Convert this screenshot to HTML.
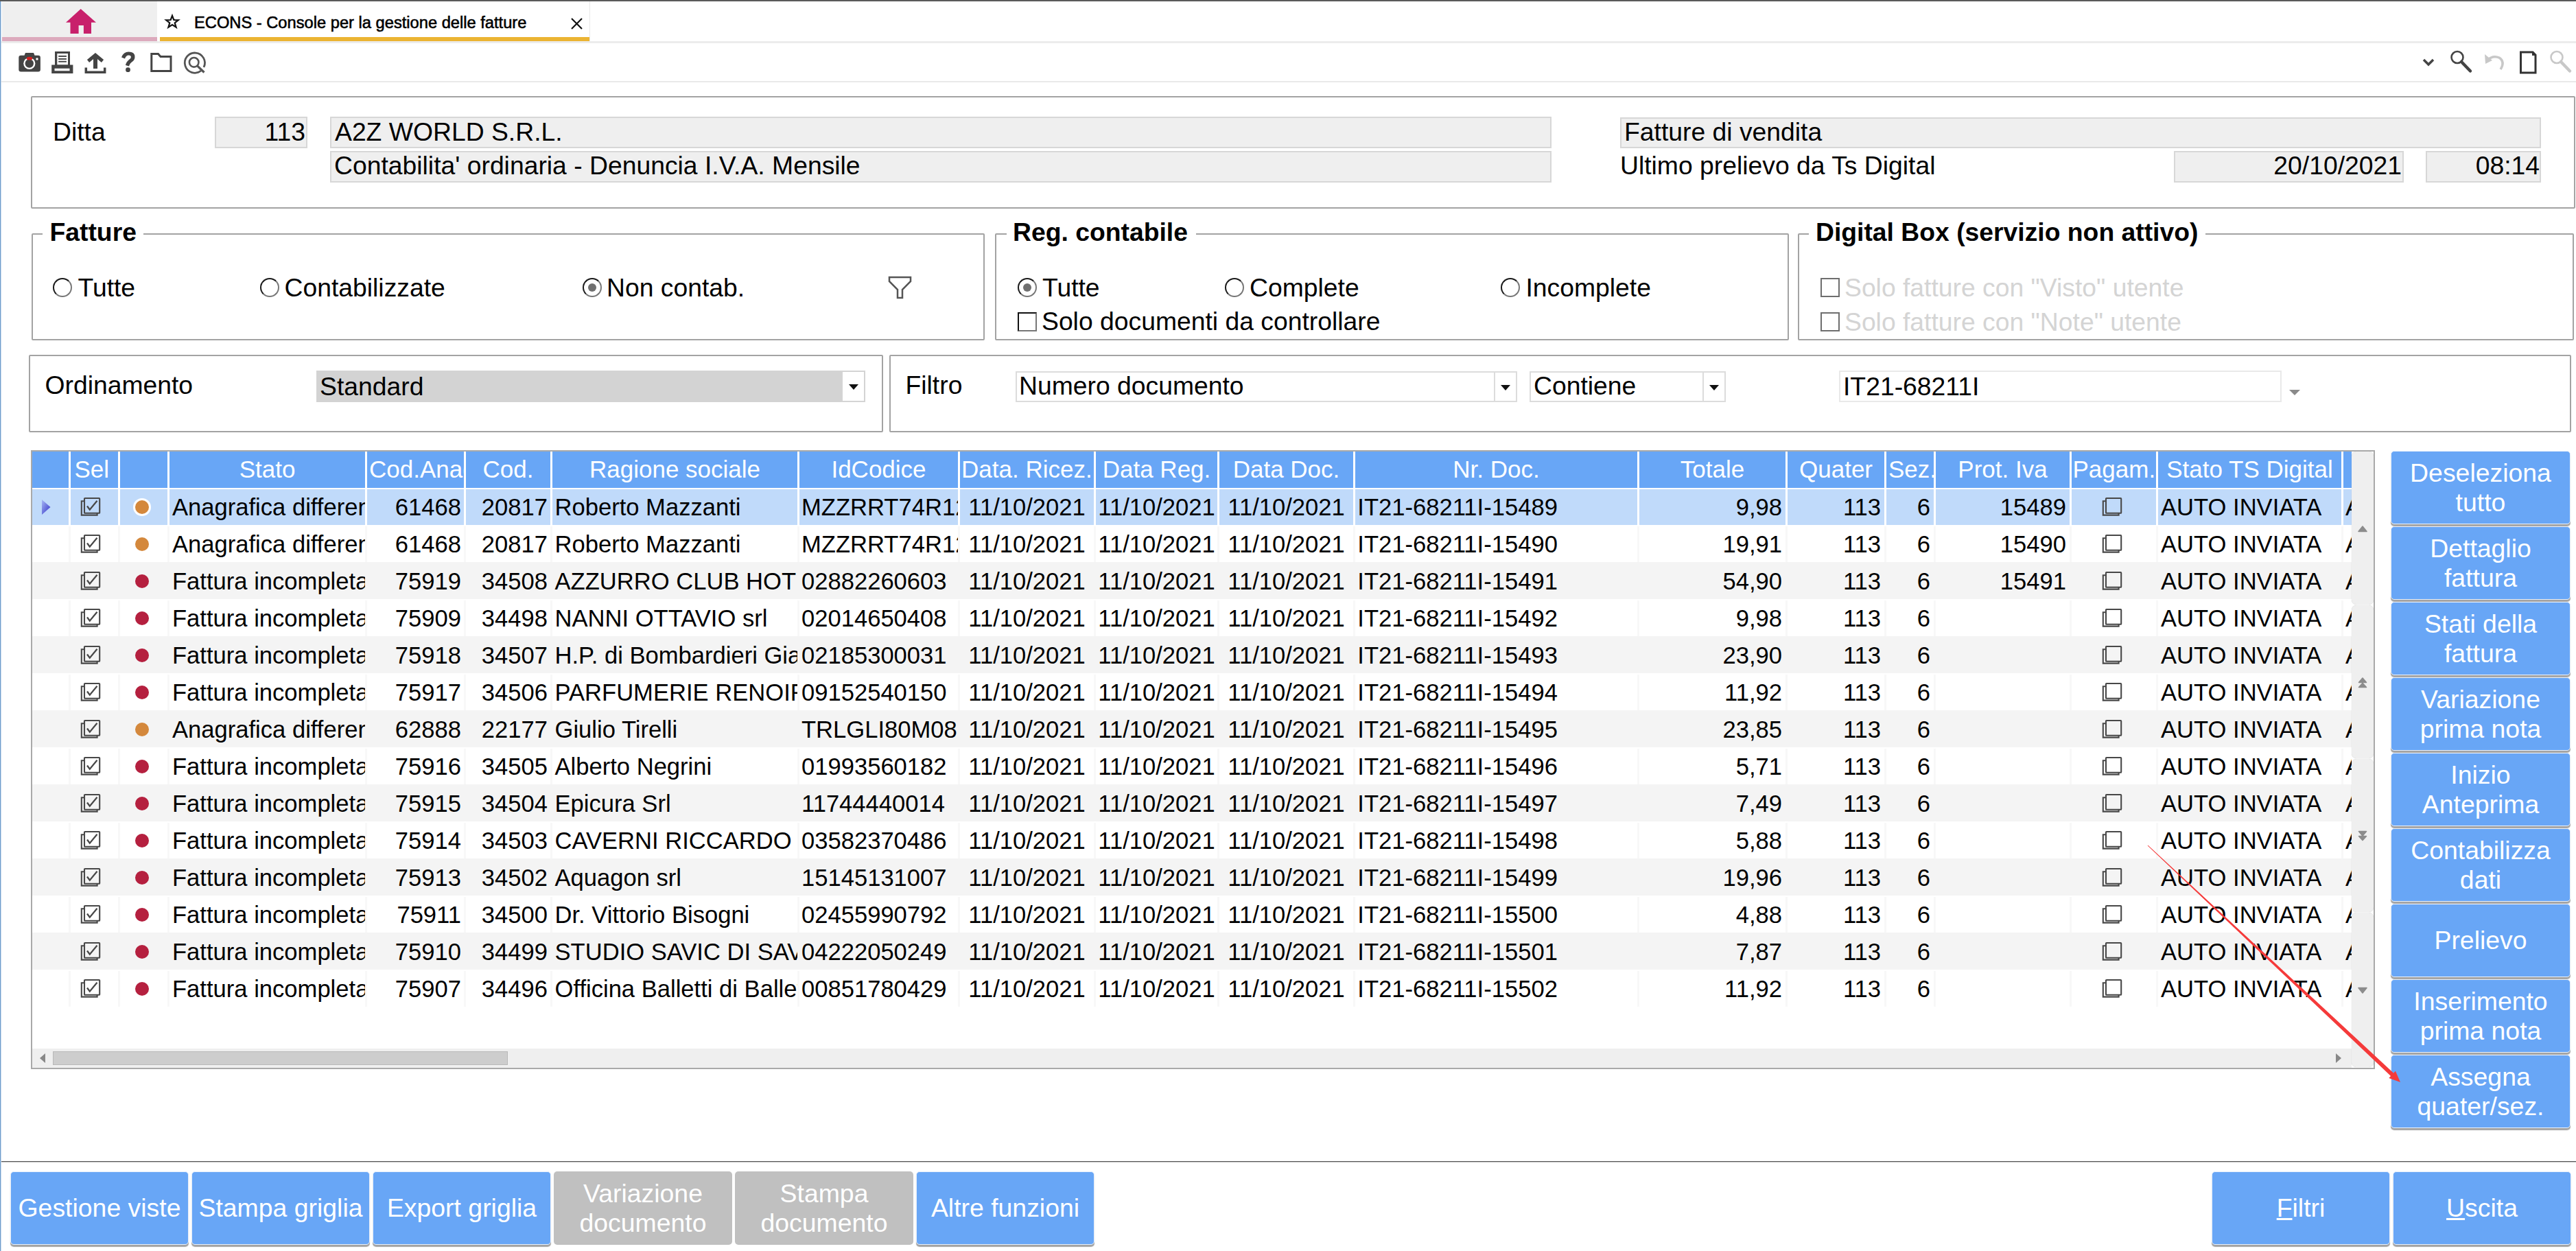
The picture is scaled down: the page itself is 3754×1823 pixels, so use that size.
<!DOCTYPE html><html><head><meta charset="utf-8"><style>
*{box-sizing:border-box;margin:0;padding:0}
html,body{width:3754px;height:1823px;overflow:hidden;background:#fff}
body{position:relative;font-family:"Liberation Sans",sans-serif;color:#000}
.a{position:absolute}
.t{position:absolute;white-space:nowrap;line-height:1}
.lbl{font-size:37px}
.fld{position:absolute;background:#efefef;border:2px solid #d7d7d7}
.box{position:absolute;border:2px solid #a3a3a3;border-radius:2px}
.leg{position:absolute;background:#fff;font-weight:bold;font-size:37.3px;white-space:nowrap;line-height:1}
.radio{position:absolute;width:28px;height:28px;border:2px solid #777;border-top-color:#1a1a1a;border-left-color:#1a1a1a;border-radius:50%;background:#fff;transform:rotate(0deg)}
.radio.on::after{content:"";position:absolute;left:6px;top:6px;width:12px;height:12px;border-radius:50%;background:#707070}
.chk{position:absolute;width:28px;height:28px;border:2px solid #505050;background:#fff}
.btn{position:absolute;background:#68a6f6;color:#fff;border-radius:5px;box-shadow:0 3px 1px rgba(0,0,0,.36);font-size:37.4px;text-align:center;display:flex;align-items:center;justify-content:center;line-height:42.5px;border:1px solid #e8f0fb}
.btn.dis{background:#c0c0c0;box-shadow:none;border:none}
.grid{position:absolute;left:45px;top:656px;width:3416px;height:902px;border:2px solid #a9a9a9;background:#fff;overflow:hidden}
.hd{position:absolute;top:0;height:53px;background:#68a6f6;color:#fff;font-size:35px;overflow:hidden;white-space:nowrap;text-align:center;line-height:1}
.hd span{position:absolute;left:0;right:0;top:15px}
.cell{position:absolute;height:52px;overflow:hidden;white-space:nowrap;font-size:34.6px;line-height:1}
.cell span{position:absolute;top:12px}
.cmb{position:absolute;background:#fff;border:2px solid #dcdcdc}
.dd{position:absolute;top:0;bottom:0;border-left:2px solid #dcdcdc;background:#fff}
.dd::after{content:"";position:absolute;left:50%;top:50%;margin-left:-7px;margin-top:-3px;border-left:7px solid transparent;border-right:7px solid transparent;border-top:8px solid #111}
.seg{position:absolute;left:0;width:32px;background:#efefef;border-radius:7px;box-shadow:0 0 1px rgba(0,0,0,.25)}
</style></head><body><div class="a" style="left:0;top:0;width:3754px;height:2px;background:#5a5a5a"></div>
<div class="a" style="left:0;top:2px;width:1px;height:1821px;background:#6f9cca"></div><div class="a" style="left:1px;top:2px;width:1px;height:1821px;background:#c5d9ee"></div>
<div class="a" style="left:2px;top:60px;width:3752px;height:3px;background:#ececec"></div>
<div class="a" style="left:3px;top:2px;width:226px;height:58px;background:#efefef"></div>
<div class="a" style="left:3px;top:54px;width:226px;height:6px;background:#dcaabd"></div>
<svg class="a" style="left:0;top:0" width="300" height="62"><path d="M117.7 13 L96 32.8 L102.5 32.8 L102.5 49 L114.6 49 L114.6 37 L121.9 37 L121.9 49 L133 49 L133 32.8 L140 32.8 Z" fill="#c8206b"/></svg>
<div class="a" style="left:230px;top:2px;width:630px;height:58px;background:#fff;border-right:1px solid #e8e8e8"></div>
<div class="a" style="left:233px;top:54px;width:626px;height:6px;background:#ebb433"></div>
<svg class="a" style="left:236px;top:16px" width="32" height="32"><path d="M15 6.8 L17.3 13 L23.9 13.3 L18.7 17.4 L20.6 23.7 L15 20 L9.4 23.7 L11.3 17.4 L6.1 13.3 L12.7 13 Z" fill="none" stroke="#111" stroke-width="2.2" stroke-linejoin="miter"/></svg>
<div class="t" style="left:282.5px;top:21px;font-size:24.8px;-webkit-text-stroke:0.6px #000;transform:scaleX(0.955);transform-origin:0 0">ECONS - Console per la gestione delle fatture</div>
<svg class="a" style="left:830px;top:24px" width="22" height="22"><path d="M3 3 L18 18 M18 3 L3 18" stroke="#111" stroke-width="2.2"/></svg>
<div class="a" style="left:2px;top:118px;width:3752px;height:2px;background:#e9e9e9"></div>
<svg class="a" style="left:0;top:60px" width="320" height="60">
<g fill="#444">
 <path d="M27.3 24 Q27.3 20.8 30.5 20.8 L35.5 20.8 L37 17 L49 17 L50.5 20.8 L55.7 20.8 Q58.9 20.8 58.9 24 L58.9 41.2 Q58.9 44.4 55.7 44.4 L30.5 44.4 Q27.3 44.4 27.3 41.2 Z"/>
 <circle cx="42.8" cy="32.5" r="8.6" fill="#fff"/><circle cx="42.8" cy="32.5" r="6.2" fill="#444"/>
 <ellipse cx="43" cy="25.2" rx="4.2" ry="2.4" fill="#d42020"/><circle cx="54" cy="26" r="1.7" fill="#fff"/>
</g>
<g fill="#444">
 <path d="M80 15 L102 15 L102 35 L80 35 Z M83.3 18 L83.3 34.6 L99 34.6 L99 18 Z" fill-rule="evenodd"/>
 <rect x="85.2" y="21" width="11.7" height="1.9"/><rect x="85.2" y="25" width="11.7" height="1.9"/><rect x="85.2" y="28.8" width="11.7" height="1.9"/>
 <path d="M75.2 34.6 L106.4 34.6 L106.4 46.9 L75.2 46.9 Z M79.5 39.8 L79.5 43.3 L101.5 43.3 L101.5 39.8 Z" fill-rule="evenodd"/>
</g>
<g fill="none" stroke="#444">
 <path d="M128.5 29 L139 20.3 L149.5 29" stroke-width="5" stroke-linejoin="miter"/>
 <path d="M139 22 L139 40" stroke-width="6"/>
 <path d="M125.3 38.4 L125.3 45.2 L152.7 45.2 L152.7 38.4" stroke-width="3.5"/>
</g>
<path d="M177 23.5 Q180 15.6 187.5 15.6 Q196.5 15.6 196.5 23 Q196.5 27.5 192 30.5 Q189.5 32.2 188.5 35 L188 36.5 L183 35 Q184 30 188 27 Q191.2 24.8 191 22.7 Q190.5 20.5 187.5 20.5 Q183.8 20.5 182 25.5 Z" fill="#444"/>
<circle cx="186.5" cy="41.7" r="3.4" fill="#444"/>
<path d="M220.8 43.5 L220.8 18.5 L230.5 18.5 L234 22.5 L249 22.5 L249 43.5 Z" fill="none" stroke="#444" stroke-width="3"/>
<path d="M293 43 A14.6 14.6 0 1 1 297 38" fill="none" stroke="#555" stroke-width="2.8"/>
<circle cx="282.7" cy="30.8" r="6.8" fill="none" stroke="#555" stroke-width="2.6"/>
<path d="M287.5 35.8 L297.5 45.5" stroke="#555" stroke-width="3.2"/>
</svg>
<svg class="a" style="left:3500px;top:60px" width="254" height="60">
<path d="M32 27 L39 34 L46 27" fill="none" stroke="#444" stroke-width="3.5"/>
<circle cx="81" cy="23.5" r="8.5" fill="none" stroke="#444" stroke-width="2.6"/>
<path d="M87 30 L100 43.5" stroke="#444" stroke-width="4.5" stroke-linecap="round"/>
<path d="M121 19 L122 33 L132 28" fill="#c8c8c8"/>
<path d="M124 28 Q133 20 142 24 Q151 30 144 41" fill="none" stroke="#c8c8c8" stroke-width="3.5"/>
<path d="M173.5 16 L191 16 L195 20 L195 46 L173.5 46 Z" fill="none" stroke="#333" stroke-width="3"/>
<path d="M190 16 L195 21 L190 21Z" fill="#333"/>
<circle cx="226" cy="23.5" r="8.5" fill="none" stroke="#c8c8c8" stroke-width="2.6"/>
<path d="M232 30 L245 43.5" stroke="#c8c8c8" stroke-width="4.5" stroke-linecap="round"/>
</svg>
<div class="box" style="left:45px;top:140px;width:3708px;height:164px;"></div>
<div class="t" style="left:77px;top:174.4px;font-size:37.3px;">Ditta</div>
<div class="fld" style="left:313px;top:170px;width:135px;height:46px;"></div>
<div class="t" style="right:3309px;top:174.4px;font-size:37.3px;">113</div>
<div class="fld" style="left:481px;top:170px;width:1780px;height:46px;"></div>
<div class="t" style="left:488px;top:174.4px;font-size:37.3px;">A2Z WORLD S.R.L.</div>
<div class="fld" style="left:481px;top:220px;width:1780px;height:46px;"></div>
<div class="t" style="left:487px;top:223.4px;font-size:37.3px;">Contabilita' ordinaria - Denuncia I.V.A. Mensile</div>
<div class="fld" style="left:2361px;top:171px;width:1342px;height:45px;"></div>
<div class="t" style="left:2367px;top:174.4px;font-size:37.3px;">Fatture di vendita</div>
<div class="t" style="left:2361px;top:223.4px;font-size:37.3px;">Ultimo prelievo da Ts Digital</div>
<div class="fld" style="left:3168px;top:220px;width:335px;height:46px;"></div>
<div class="t" style="right:254px;top:223.4px;font-size:37.3px;">20/10/2021</div>
<div class="fld" style="left:3535px;top:220px;width:168px;height:46px;"></div>
<div class="t" style="right:53px;top:223.4px;font-size:37.3px;">08:14</div>
<div class="box" style="left:46px;top:340px;width:1389px;height:156px;"></div>
<div class="a" style="left:62px;top:338px;width:147px;height:6px;background:#fff"></div>
<div class="leg" style="left:72.5px;top:320.4px;background:transparent">Fatture</div>
<div class="box" style="left:1450px;top:340px;width:1157px;height:156px;"></div>
<div class="a" style="left:1467px;top:338px;width:276px;height:6px;background:#fff"></div>
<div class="leg" style="left:1476px;top:320.4px;background:transparent">Reg. contabile</div>
<div class="box" style="left:2620px;top:340px;width:1131px;height:156px;"></div>
<div class="a" style="left:2636px;top:338px;width:578px;height:6px;background:#fff"></div>
<div class="leg" style="left:2646px;top:320.4px;background:transparent">Digital Box (servizio non attivo)</div>
<div class="radio" style="left:77px;top:405px"></div>
<div class="t" style="left:113.5px;top:401.4px;font-size:37.3px;">Tutte</div>
<div class="radio" style="left:379px;top:405px"></div>
<div class="t" style="left:414.5px;top:401.4px;font-size:37.3px;">Contabilizzate</div>
<div class="radio on" style="left:849px;top:405px"></div>
<div class="t" style="left:884px;top:401.4px;font-size:37.3px;">Non contab.</div>
<svg class="a" style="left:1290px;top:398px" width="44" height="44"><path d="M6 6 L37 6 L37 12 L25 24 L25 36 L18 36 L18 24 L6 12 Z" fill="none" stroke="#555" stroke-width="2.5" stroke-linejoin="miter"/></svg>
<div class="radio on" style="left:1483px;top:405px"></div>
<div class="t" style="left:1519px;top:401.4px;font-size:37.3px;">Tutte</div>
<div class="radio" style="left:1785px;top:405px"></div>
<div class="t" style="left:1821px;top:401.4px;font-size:37.3px;">Complete</div>
<div class="radio" style="left:2187px;top:405px"></div>
<div class="t" style="left:2223.5px;top:401.4px;font-size:37.3px;">Incomplete</div>
<div class="chk" style="left:1483px;top:455px;border-color:#777;border-top-color:#111;border-left-color:#111"></div>
<div class="t" style="left:1518px;top:450.4px;font-size:37.3px;">Solo documenti da controllare</div>
<div class="chk" style="left:2653px;top:405px;border-color:#6e6e6e"></div>
<div class="t" style="left:2688px;top:401.4px;font-size:37.3px;color:#d4d4d4">Solo fatture con "Visto" utente</div>
<div class="chk" style="left:2653px;top:455px;border-color:#6e6e6e"></div>
<div class="t" style="left:2688px;top:451.4px;font-size:37.3px;color:#d4d4d4">Solo fatture con "Note" utente</div>
<div class="box" style="left:42px;top:517px;width:1245px;height:113px;"></div>
<div class="t" style="left:65.5px;top:543.4px;font-size:37.3px;">Ordinamento</div>
<div class="a" style="left:461px;top:540px;width:766px;height:46px;background:#d3d3d3"></div>
<div class="cmb" style="left:1226px;top:540px;width:35px;height:46px;border-color:#d4d4d4"><div class="dd" style="left:0;right:0;border-left:none"></div></div>
<div class="t" style="left:466px;top:544.9px;font-size:37.3px;">Standard</div>
<div class="box" style="left:1296px;top:517px;width:2451px;height:113px;"></div>
<div class="t" style="left:1319.5px;top:543.4px;font-size:37.3px;">Filtro</div>
<div class="cmb" style="left:1480px;top:541px;width:731px;height:45px"><div class="dd" style="left:695px;right:0"></div></div>
<div class="t" style="left:1485px;top:544.4px;font-size:37.3px;">Numero documento</div>
<div class="cmb" style="left:2229px;top:541px;width:286px;height:45px"><div class="dd" style="left:250px;right:0"></div></div>
<div class="t" style="left:2235px;top:544.4px;font-size:37.3px;">Contiene</div>
<div class="cmb" style="left:2680px;top:540px;width:645px;height:46px;border-color:#e9e9e9"></div>
<div class="t" style="left:2686px;top:544.9px;font-size:37.3px;">IT21-68211I</div>
<div class="a" style="left:3336px;top:568px;width:0;height:0;border-left:8px solid transparent;border-right:8px solid transparent;border-top:8px solid #8a8a8a"></div>
<div class="grid">
<div class="a" style="left:0;top:0;width:3380px;height:53px;background:#68a6f6"></div>
<div class="a" style="left:0;top:53px;width:3380px;height:2px;background:#fff"></div>
<div class="hd" style="left:0px;width:53px"><span style="position:absolute;left:-50px;right:-50px;top:8.2px;text-align:center"></span></div>
<div class="hd" style="left:56px;width:69px"><span style="position:absolute;left:5.5px;right:auto;top:8.2px">Sel</span></div>
<div class="hd" style="left:128px;width:69px"><span style="position:absolute;left:-50px;right:-50px;top:8.2px;text-align:center"></span></div>
<div class="hd" style="left:200px;width:285px"><span style="position:absolute;left:-50px;right:-50px;top:8.2px;text-align:center">Stato</span></div>
<div class="hd" style="left:488px;width:141px"><span style="position:absolute;left:3px;right:auto;top:8.2px">Cod.Anag.</span></div>
<div class="hd" style="left:632px;width:123px"><span style="position:absolute;left:-50px;right:-50px;top:8.2px;text-align:center">Cod.</span></div>
<div class="hd" style="left:758px;width:357px"><span style="position:absolute;left:-50px;right:-50px;top:8.2px;text-align:center">Ragione sociale</span></div>
<div class="hd" style="left:1118px;width:231px"><span style="position:absolute;left:-50px;right:-50px;top:8.2px;text-align:center">IdCodice</span></div>
<div class="hd" style="left:1352px;width:195px"><span style="position:absolute;left:2px;right:auto;top:8.2px">Data. Ricez.</span></div>
<div class="hd" style="left:1550px;width:177px"><span style="position:absolute;left:-50px;right:-50px;top:8.2px;text-align:center">Data Reg.</span></div>
<div class="hd" style="left:1730px;width:195px"><span style="position:absolute;left:-50px;right:-50px;top:8.2px;text-align:center">Data Doc.</span></div>
<div class="hd" style="left:1928px;width:411px"><span style="position:absolute;left:-50px;right:-50px;top:8.2px;text-align:center">Nr. Doc.</span></div>
<div class="hd" style="left:2342px;width:213px"><span style="position:absolute;left:-50px;right:-50px;top:8.2px;text-align:center">Totale</span></div>
<div class="hd" style="left:2558px;width:141px"><span style="position:absolute;left:-50px;right:-50px;top:8.2px;text-align:center">Quater</span></div>
<div class="hd" style="left:2702px;width:69px"><span style="position:absolute;left:3px;right:auto;top:8.2px">Sez.</span></div>
<div class="hd" style="left:2774px;width:195px"><span style="position:absolute;left:-50px;right:-50px;top:8.2px;text-align:center">Prot. Iva</span></div>
<div class="hd" style="left:2972px;width:123px"><span style="position:absolute;left:1.5px;right:auto;top:8.2px">Pagam.</span></div>
<div class="hd" style="left:3098px;width:267px"><span style="position:absolute;left:-50px;right:-50px;top:8.2px;text-align:center">Stato TS Digital</span></div>
<div class="hd" style="left:3368px;width:85px"><span style="position:absolute;left:-50px;right:-50px;top:8.2px;text-align:center">Al</span></div>
<div class="a" style="left:53px;top:0;width:3px;height:53px;background:#fff"></div>
<div class="a" style="left:125px;top:0;width:3px;height:53px;background:#fff"></div>
<div class="a" style="left:197px;top:0;width:3px;height:53px;background:#fff"></div>
<div class="a" style="left:485px;top:0;width:3px;height:53px;background:#fff"></div>
<div class="a" style="left:629px;top:0;width:3px;height:53px;background:#fff"></div>
<div class="a" style="left:755px;top:0;width:3px;height:53px;background:#fff"></div>
<div class="a" style="left:1115px;top:0;width:3px;height:53px;background:#fff"></div>
<div class="a" style="left:1349px;top:0;width:3px;height:53px;background:#fff"></div>
<div class="a" style="left:1547px;top:0;width:3px;height:53px;background:#fff"></div>
<div class="a" style="left:1727px;top:0;width:3px;height:53px;background:#fff"></div>
<div class="a" style="left:1925px;top:0;width:3px;height:53px;background:#fff"></div>
<div class="a" style="left:2339px;top:0;width:3px;height:53px;background:#fff"></div>
<div class="a" style="left:2555px;top:0;width:3px;height:53px;background:#fff"></div>
<div class="a" style="left:2699px;top:0;width:3px;height:53px;background:#fff"></div>
<div class="a" style="left:2771px;top:0;width:3px;height:53px;background:#fff"></div>
<div class="a" style="left:2969px;top:0;width:3px;height:53px;background:#fff"></div>
<div class="a" style="left:3095px;top:0;width:3px;height:53px;background:#fff"></div>
<div class="a" style="left:3365px;top:0;width:3px;height:53px;background:#fff"></div>
<div class="a" style="left:0;top:55px;width:3380px;height:52px;background:#c0dafa"></div>
<div class="a" style="left:53px;top:55px;width:3px;height:52px;background:#fff"></div>
<div class="a" style="left:125px;top:55px;width:3px;height:52px;background:#fff"></div>
<div class="a" style="left:197px;top:55px;width:3px;height:52px;background:#fff"></div>
<div class="a" style="left:485px;top:55px;width:3px;height:52px;background:#fff"></div>
<div class="a" style="left:629px;top:55px;width:3px;height:52px;background:#fff"></div>
<div class="a" style="left:755px;top:55px;width:3px;height:52px;background:#fff"></div>
<div class="a" style="left:1115px;top:55px;width:3px;height:52px;background:#fff"></div>
<div class="a" style="left:1349px;top:55px;width:3px;height:52px;background:#fff"></div>
<div class="a" style="left:1547px;top:55px;width:3px;height:52px;background:#fff"></div>
<div class="a" style="left:1727px;top:55px;width:3px;height:52px;background:#fff"></div>
<div class="a" style="left:1925px;top:55px;width:3px;height:52px;background:#fff"></div>
<div class="a" style="left:2339px;top:55px;width:3px;height:52px;background:#fff"></div>
<div class="a" style="left:2555px;top:55px;width:3px;height:52px;background:#fff"></div>
<div class="a" style="left:2699px;top:55px;width:3px;height:52px;background:#fff"></div>
<div class="a" style="left:2771px;top:55px;width:3px;height:52px;background:#fff"></div>
<div class="a" style="left:2969px;top:55px;width:3px;height:52px;background:#fff"></div>
<div class="a" style="left:3095px;top:55px;width:3px;height:52px;background:#fff"></div>
<div class="a" style="left:3365px;top:55px;width:3px;height:52px;background:#fff"></div>
<svg class="a" style="left:14px;top:70px" width="14" height="23"><defs><linearGradient id="ag" x1="0" y1="0" x2="1" y2="1"><stop offset="0" stop-color="#a8b8f4"/><stop offset="1" stop-color="#3030c8"/></linearGradient></defs><path d="M0 0 L12.5 11 L0 22 Z" fill="url(#ag)"/></svg>
<svg class="a" style="left:70px;top:66px" width="30" height="30"><path d="M6 6.3 L1.8 6.3 L1.8 26.6 L24.6 26.6 L24.6 24" fill="none" stroke="#484848" stroke-width="2.1"/><rect x="6" y="2" width="22.2" height="21.8" rx="0.8" fill="none" stroke="#484848" stroke-width="2.1"/><path d="M10 13.5 L13.8 18.7 L24.5 5.8" fill="none" stroke="#484848" stroke-width="2.3"/></svg>
<svg class="a" style="left:144px;top:65px" width="32" height="32"><circle cx="16" cy="16" r="13" fill="#fff"/><circle cx="16" cy="16" r="10" fill="#d4883c"/></svg>
<div class="cell" style="left:200px;top:55px;width:285px"><span style="left:4px;top:8.7px">Anagrafica differenza</span></div>
<div class="cell" style="left:488px;top:55px;width:141px"><span style="right:4px;top:8.7px">61468</span></div>
<div class="cell" style="left:632px;top:55px;width:123px"><span style="right:4px;top:8.7px">20817</span></div>
<div class="cell" style="left:758px;top:55px;width:357px"><span style="left:3.5px;top:8.7px">Roberto Mazzanti</span></div>
<div class="cell" style="left:1118px;top:55px;width:231px"><span style="left:3px;top:8.7px">MZZRRT74R12</span></div>
<div class="cell" style="left:1352px;top:55px;width:195px"><span style="left:0;right:0;text-align:center;top:8.7px">11/10/2021</span></div>
<div class="cell" style="left:1550px;top:55px;width:177px"><span style="left:0;right:0;text-align:center;top:8.7px">11/10/2021</span></div>
<div class="cell" style="left:1730px;top:55px;width:195px"><span style="left:0;right:0;text-align:center;top:8.7px">11/10/2021</span></div>
<div class="cell" style="left:1928px;top:55px;width:411px"><span style="left:3.3px;top:8.7px">IT21-68211I-15489</span></div>
<div class="cell" style="left:2342px;top:55px;width:213px"><span style="right:5px;top:8.7px">9,98</span></div>
<div class="cell" style="left:2558px;top:55px;width:141px"><span style="right:5px;top:8.7px">113</span></div>
<div class="cell" style="left:2702px;top:55px;width:69px"><span style="right:5px;top:8.7px">6</span></div>
<div class="cell" style="left:2774px;top:55px;width:195px"><span style="right:5px;top:8.7px">15489</span></div>
<svg class="a" style="left:3016px;top:66px" width="30" height="30"><path d="M6 6.3 L1.8 6.3 L1.8 26.6 L24.6 26.6 L24.6 24" fill="none" stroke="#484848" stroke-width="2.1"/><rect x="6" y="2" width="22.2" height="21.8" rx="0.8" fill="none" stroke="#484848" stroke-width="2.1"/></svg>
<div class="cell" style="left:3098px;top:55px;width:267px"><span style="left:4px;top:8.7px">AUTO INVIATA</span></div>
<div class="cell" style="left:3368px;top:55px;width:85px"><span style="left:3px;top:8.7px">AUTO INVIATA</span></div>
<div class="a" style="left:0;top:107px;width:3380px;height:54px;background:#fff"></div>
<div class="a" style="left:53px;top:109px;width:3px;height:52px;background:#f8f8f8"></div>
<div class="a" style="left:125px;top:109px;width:3px;height:52px;background:#f8f8f8"></div>
<div class="a" style="left:197px;top:109px;width:3px;height:52px;background:#f8f8f8"></div>
<div class="a" style="left:485px;top:109px;width:3px;height:52px;background:#f8f8f8"></div>
<div class="a" style="left:629px;top:109px;width:3px;height:52px;background:#f8f8f8"></div>
<div class="a" style="left:755px;top:109px;width:3px;height:52px;background:#f8f8f8"></div>
<div class="a" style="left:1115px;top:109px;width:3px;height:52px;background:#f8f8f8"></div>
<div class="a" style="left:1349px;top:109px;width:3px;height:52px;background:#f8f8f8"></div>
<div class="a" style="left:1547px;top:109px;width:3px;height:52px;background:#f8f8f8"></div>
<div class="a" style="left:1727px;top:109px;width:3px;height:52px;background:#f8f8f8"></div>
<div class="a" style="left:1925px;top:109px;width:3px;height:52px;background:#f8f8f8"></div>
<div class="a" style="left:2339px;top:109px;width:3px;height:52px;background:#f8f8f8"></div>
<div class="a" style="left:2555px;top:109px;width:3px;height:52px;background:#f8f8f8"></div>
<div class="a" style="left:2699px;top:109px;width:3px;height:52px;background:#f8f8f8"></div>
<div class="a" style="left:2771px;top:109px;width:3px;height:52px;background:#f8f8f8"></div>
<div class="a" style="left:2969px;top:109px;width:3px;height:52px;background:#f8f8f8"></div>
<div class="a" style="left:3095px;top:109px;width:3px;height:52px;background:#f8f8f8"></div>
<div class="a" style="left:3365px;top:109px;width:3px;height:52px;background:#f8f8f8"></div>
<svg class="a" style="left:70px;top:120px" width="30" height="30"><path d="M6 6.3 L1.8 6.3 L1.8 26.6 L24.6 26.6 L24.6 24" fill="none" stroke="#484848" stroke-width="2.1"/><rect x="6" y="2" width="22.2" height="21.8" rx="0.8" fill="none" stroke="#484848" stroke-width="2.1"/><path d="M10 13.5 L13.8 18.7 L24.5 5.8" fill="none" stroke="#484848" stroke-width="2.3"/></svg>
<svg class="a" style="left:144px;top:119px" width="32" height="32"><circle cx="16" cy="16" r="10" fill="#d4883c"/></svg>
<div class="cell" style="left:200px;top:109px;width:285px"><span style="left:4px;top:8.7px">Anagrafica differenza</span></div>
<div class="cell" style="left:488px;top:109px;width:141px"><span style="right:4px;top:8.7px">61468</span></div>
<div class="cell" style="left:632px;top:109px;width:123px"><span style="right:4px;top:8.7px">20817</span></div>
<div class="cell" style="left:758px;top:109px;width:357px"><span style="left:3.5px;top:8.7px">Roberto Mazzanti</span></div>
<div class="cell" style="left:1118px;top:109px;width:231px"><span style="left:3px;top:8.7px">MZZRRT74R12</span></div>
<div class="cell" style="left:1352px;top:109px;width:195px"><span style="left:0;right:0;text-align:center;top:8.7px">11/10/2021</span></div>
<div class="cell" style="left:1550px;top:109px;width:177px"><span style="left:0;right:0;text-align:center;top:8.7px">11/10/2021</span></div>
<div class="cell" style="left:1730px;top:109px;width:195px"><span style="left:0;right:0;text-align:center;top:8.7px">11/10/2021</span></div>
<div class="cell" style="left:1928px;top:109px;width:411px"><span style="left:3.3px;top:8.7px">IT21-68211I-15490</span></div>
<div class="cell" style="left:2342px;top:109px;width:213px"><span style="right:5px;top:8.7px">19,91</span></div>
<div class="cell" style="left:2558px;top:109px;width:141px"><span style="right:5px;top:8.7px">113</span></div>
<div class="cell" style="left:2702px;top:109px;width:69px"><span style="right:5px;top:8.7px">6</span></div>
<div class="cell" style="left:2774px;top:109px;width:195px"><span style="right:5px;top:8.7px">15490</span></div>
<svg class="a" style="left:3016px;top:120px" width="30" height="30"><path d="M6 6.3 L1.8 6.3 L1.8 26.6 L24.6 26.6 L24.6 24" fill="none" stroke="#484848" stroke-width="2.1"/><rect x="6" y="2" width="22.2" height="21.8" rx="0.8" fill="none" stroke="#484848" stroke-width="2.1"/></svg>
<div class="cell" style="left:3098px;top:109px;width:267px"><span style="left:4px;top:8.7px">AUTO INVIATA</span></div>
<div class="cell" style="left:3368px;top:109px;width:85px"><span style="left:3px;top:8.7px">AUTO INVIATA</span></div>
<div class="a" style="left:0;top:161px;width:3380px;height:54px;background:#f4f4f4"></div>
<svg class="a" style="left:70px;top:174px" width="30" height="30"><path d="M6 6.3 L1.8 6.3 L1.8 26.6 L24.6 26.6 L24.6 24" fill="none" stroke="#484848" stroke-width="2.1"/><rect x="6" y="2" width="22.2" height="21.8" rx="0.8" fill="none" stroke="#484848" stroke-width="2.1"/><path d="M10 13.5 L13.8 18.7 L24.5 5.8" fill="none" stroke="#484848" stroke-width="2.3"/></svg>
<svg class="a" style="left:144px;top:173px" width="32" height="32"><circle cx="16" cy="16" r="10" fill="#b5203f"/></svg>
<div class="cell" style="left:200px;top:163px;width:285px"><span style="left:4px;top:8.7px">Fattura incompleta</span></div>
<div class="cell" style="left:488px;top:163px;width:141px"><span style="right:4px;top:8.7px">75919</span></div>
<div class="cell" style="left:632px;top:163px;width:123px"><span style="right:4px;top:8.7px">34508</span></div>
<div class="cell" style="left:758px;top:163px;width:357px"><span style="left:3.5px;top:8.7px">AZZURRO CLUB HOTEL</span></div>
<div class="cell" style="left:1118px;top:163px;width:231px"><span style="left:3px;top:8.7px">02882260603</span></div>
<div class="cell" style="left:1352px;top:163px;width:195px"><span style="left:0;right:0;text-align:center;top:8.7px">11/10/2021</span></div>
<div class="cell" style="left:1550px;top:163px;width:177px"><span style="left:0;right:0;text-align:center;top:8.7px">11/10/2021</span></div>
<div class="cell" style="left:1730px;top:163px;width:195px"><span style="left:0;right:0;text-align:center;top:8.7px">11/10/2021</span></div>
<div class="cell" style="left:1928px;top:163px;width:411px"><span style="left:3.3px;top:8.7px">IT21-68211I-15491</span></div>
<div class="cell" style="left:2342px;top:163px;width:213px"><span style="right:5px;top:8.7px">54,90</span></div>
<div class="cell" style="left:2558px;top:163px;width:141px"><span style="right:5px;top:8.7px">113</span></div>
<div class="cell" style="left:2702px;top:163px;width:69px"><span style="right:5px;top:8.7px">6</span></div>
<div class="cell" style="left:2774px;top:163px;width:195px"><span style="right:5px;top:8.7px">15491</span></div>
<svg class="a" style="left:3016px;top:174px" width="30" height="30"><path d="M6 6.3 L1.8 6.3 L1.8 26.6 L24.6 26.6 L24.6 24" fill="none" stroke="#484848" stroke-width="2.1"/><rect x="6" y="2" width="22.2" height="21.8" rx="0.8" fill="none" stroke="#484848" stroke-width="2.1"/></svg>
<div class="cell" style="left:3098px;top:163px;width:267px"><span style="left:4px;top:8.7px">AUTO INVIATA</span></div>
<div class="cell" style="left:3368px;top:163px;width:85px"><span style="left:3px;top:8.7px">AUTO INVIATA</span></div>
<div class="a" style="left:0;top:215px;width:3380px;height:54px;background:#fff"></div>
<div class="a" style="left:53px;top:217px;width:3px;height:52px;background:#f8f8f8"></div>
<div class="a" style="left:125px;top:217px;width:3px;height:52px;background:#f8f8f8"></div>
<div class="a" style="left:197px;top:217px;width:3px;height:52px;background:#f8f8f8"></div>
<div class="a" style="left:485px;top:217px;width:3px;height:52px;background:#f8f8f8"></div>
<div class="a" style="left:629px;top:217px;width:3px;height:52px;background:#f8f8f8"></div>
<div class="a" style="left:755px;top:217px;width:3px;height:52px;background:#f8f8f8"></div>
<div class="a" style="left:1115px;top:217px;width:3px;height:52px;background:#f8f8f8"></div>
<div class="a" style="left:1349px;top:217px;width:3px;height:52px;background:#f8f8f8"></div>
<div class="a" style="left:1547px;top:217px;width:3px;height:52px;background:#f8f8f8"></div>
<div class="a" style="left:1727px;top:217px;width:3px;height:52px;background:#f8f8f8"></div>
<div class="a" style="left:1925px;top:217px;width:3px;height:52px;background:#f8f8f8"></div>
<div class="a" style="left:2339px;top:217px;width:3px;height:52px;background:#f8f8f8"></div>
<div class="a" style="left:2555px;top:217px;width:3px;height:52px;background:#f8f8f8"></div>
<div class="a" style="left:2699px;top:217px;width:3px;height:52px;background:#f8f8f8"></div>
<div class="a" style="left:2771px;top:217px;width:3px;height:52px;background:#f8f8f8"></div>
<div class="a" style="left:2969px;top:217px;width:3px;height:52px;background:#f8f8f8"></div>
<div class="a" style="left:3095px;top:217px;width:3px;height:52px;background:#f8f8f8"></div>
<div class="a" style="left:3365px;top:217px;width:3px;height:52px;background:#f8f8f8"></div>
<svg class="a" style="left:70px;top:228px" width="30" height="30"><path d="M6 6.3 L1.8 6.3 L1.8 26.6 L24.6 26.6 L24.6 24" fill="none" stroke="#484848" stroke-width="2.1"/><rect x="6" y="2" width="22.2" height="21.8" rx="0.8" fill="none" stroke="#484848" stroke-width="2.1"/><path d="M10 13.5 L13.8 18.7 L24.5 5.8" fill="none" stroke="#484848" stroke-width="2.3"/></svg>
<svg class="a" style="left:144px;top:227px" width="32" height="32"><circle cx="16" cy="16" r="10" fill="#b5203f"/></svg>
<div class="cell" style="left:200px;top:217px;width:285px"><span style="left:4px;top:8.7px">Fattura incompleta</span></div>
<div class="cell" style="left:488px;top:217px;width:141px"><span style="right:4px;top:8.7px">75909</span></div>
<div class="cell" style="left:632px;top:217px;width:123px"><span style="right:4px;top:8.7px">34498</span></div>
<div class="cell" style="left:758px;top:217px;width:357px"><span style="left:3.5px;top:8.7px">NANNI OTTAVIO srl</span></div>
<div class="cell" style="left:1118px;top:217px;width:231px"><span style="left:3px;top:8.7px">02014650408</span></div>
<div class="cell" style="left:1352px;top:217px;width:195px"><span style="left:0;right:0;text-align:center;top:8.7px">11/10/2021</span></div>
<div class="cell" style="left:1550px;top:217px;width:177px"><span style="left:0;right:0;text-align:center;top:8.7px">11/10/2021</span></div>
<div class="cell" style="left:1730px;top:217px;width:195px"><span style="left:0;right:0;text-align:center;top:8.7px">11/10/2021</span></div>
<div class="cell" style="left:1928px;top:217px;width:411px"><span style="left:3.3px;top:8.7px">IT21-68211I-15492</span></div>
<div class="cell" style="left:2342px;top:217px;width:213px"><span style="right:5px;top:8.7px">9,98</span></div>
<div class="cell" style="left:2558px;top:217px;width:141px"><span style="right:5px;top:8.7px">113</span></div>
<div class="cell" style="left:2702px;top:217px;width:69px"><span style="right:5px;top:8.7px">6</span></div>
<div class="cell" style="left:2774px;top:217px;width:195px"><span style="right:5px;top:8.7px"></span></div>
<svg class="a" style="left:3016px;top:228px" width="30" height="30"><path d="M6 6.3 L1.8 6.3 L1.8 26.6 L24.6 26.6 L24.6 24" fill="none" stroke="#484848" stroke-width="2.1"/><rect x="6" y="2" width="22.2" height="21.8" rx="0.8" fill="none" stroke="#484848" stroke-width="2.1"/></svg>
<div class="cell" style="left:3098px;top:217px;width:267px"><span style="left:4px;top:8.7px">AUTO INVIATA</span></div>
<div class="cell" style="left:3368px;top:217px;width:85px"><span style="left:3px;top:8.7px">AUTO INVIATA</span></div>
<div class="a" style="left:0;top:269px;width:3380px;height:54px;background:#f4f4f4"></div>
<svg class="a" style="left:70px;top:282px" width="30" height="30"><path d="M6 6.3 L1.8 6.3 L1.8 26.6 L24.6 26.6 L24.6 24" fill="none" stroke="#484848" stroke-width="2.1"/><rect x="6" y="2" width="22.2" height="21.8" rx="0.8" fill="none" stroke="#484848" stroke-width="2.1"/><path d="M10 13.5 L13.8 18.7 L24.5 5.8" fill="none" stroke="#484848" stroke-width="2.3"/></svg>
<svg class="a" style="left:144px;top:281px" width="32" height="32"><circle cx="16" cy="16" r="10" fill="#b5203f"/></svg>
<div class="cell" style="left:200px;top:271px;width:285px"><span style="left:4px;top:8.7px">Fattura incompleta</span></div>
<div class="cell" style="left:488px;top:271px;width:141px"><span style="right:4px;top:8.7px">75918</span></div>
<div class="cell" style="left:632px;top:271px;width:123px"><span style="right:4px;top:8.7px">34507</span></div>
<div class="cell" style="left:758px;top:271px;width:357px"><span style="left:3.5px;top:8.7px">H.P. di Bombardieri Gianni</span></div>
<div class="cell" style="left:1118px;top:271px;width:231px"><span style="left:3px;top:8.7px">02185300031</span></div>
<div class="cell" style="left:1352px;top:271px;width:195px"><span style="left:0;right:0;text-align:center;top:8.7px">11/10/2021</span></div>
<div class="cell" style="left:1550px;top:271px;width:177px"><span style="left:0;right:0;text-align:center;top:8.7px">11/10/2021</span></div>
<div class="cell" style="left:1730px;top:271px;width:195px"><span style="left:0;right:0;text-align:center;top:8.7px">11/10/2021</span></div>
<div class="cell" style="left:1928px;top:271px;width:411px"><span style="left:3.3px;top:8.7px">IT21-68211I-15493</span></div>
<div class="cell" style="left:2342px;top:271px;width:213px"><span style="right:5px;top:8.7px">23,90</span></div>
<div class="cell" style="left:2558px;top:271px;width:141px"><span style="right:5px;top:8.7px">113</span></div>
<div class="cell" style="left:2702px;top:271px;width:69px"><span style="right:5px;top:8.7px">6</span></div>
<div class="cell" style="left:2774px;top:271px;width:195px"><span style="right:5px;top:8.7px"></span></div>
<svg class="a" style="left:3016px;top:282px" width="30" height="30"><path d="M6 6.3 L1.8 6.3 L1.8 26.6 L24.6 26.6 L24.6 24" fill="none" stroke="#484848" stroke-width="2.1"/><rect x="6" y="2" width="22.2" height="21.8" rx="0.8" fill="none" stroke="#484848" stroke-width="2.1"/></svg>
<div class="cell" style="left:3098px;top:271px;width:267px"><span style="left:4px;top:8.7px">AUTO INVIATA</span></div>
<div class="cell" style="left:3368px;top:271px;width:85px"><span style="left:3px;top:8.7px">AUTO INVIATA</span></div>
<div class="a" style="left:0;top:323px;width:3380px;height:54px;background:#fff"></div>
<div class="a" style="left:53px;top:325px;width:3px;height:52px;background:#f8f8f8"></div>
<div class="a" style="left:125px;top:325px;width:3px;height:52px;background:#f8f8f8"></div>
<div class="a" style="left:197px;top:325px;width:3px;height:52px;background:#f8f8f8"></div>
<div class="a" style="left:485px;top:325px;width:3px;height:52px;background:#f8f8f8"></div>
<div class="a" style="left:629px;top:325px;width:3px;height:52px;background:#f8f8f8"></div>
<div class="a" style="left:755px;top:325px;width:3px;height:52px;background:#f8f8f8"></div>
<div class="a" style="left:1115px;top:325px;width:3px;height:52px;background:#f8f8f8"></div>
<div class="a" style="left:1349px;top:325px;width:3px;height:52px;background:#f8f8f8"></div>
<div class="a" style="left:1547px;top:325px;width:3px;height:52px;background:#f8f8f8"></div>
<div class="a" style="left:1727px;top:325px;width:3px;height:52px;background:#f8f8f8"></div>
<div class="a" style="left:1925px;top:325px;width:3px;height:52px;background:#f8f8f8"></div>
<div class="a" style="left:2339px;top:325px;width:3px;height:52px;background:#f8f8f8"></div>
<div class="a" style="left:2555px;top:325px;width:3px;height:52px;background:#f8f8f8"></div>
<div class="a" style="left:2699px;top:325px;width:3px;height:52px;background:#f8f8f8"></div>
<div class="a" style="left:2771px;top:325px;width:3px;height:52px;background:#f8f8f8"></div>
<div class="a" style="left:2969px;top:325px;width:3px;height:52px;background:#f8f8f8"></div>
<div class="a" style="left:3095px;top:325px;width:3px;height:52px;background:#f8f8f8"></div>
<div class="a" style="left:3365px;top:325px;width:3px;height:52px;background:#f8f8f8"></div>
<svg class="a" style="left:70px;top:336px" width="30" height="30"><path d="M6 6.3 L1.8 6.3 L1.8 26.6 L24.6 26.6 L24.6 24" fill="none" stroke="#484848" stroke-width="2.1"/><rect x="6" y="2" width="22.2" height="21.8" rx="0.8" fill="none" stroke="#484848" stroke-width="2.1"/><path d="M10 13.5 L13.8 18.7 L24.5 5.8" fill="none" stroke="#484848" stroke-width="2.3"/></svg>
<svg class="a" style="left:144px;top:335px" width="32" height="32"><circle cx="16" cy="16" r="10" fill="#b5203f"/></svg>
<div class="cell" style="left:200px;top:325px;width:285px"><span style="left:4px;top:8.7px">Fattura incompleta</span></div>
<div class="cell" style="left:488px;top:325px;width:141px"><span style="right:4px;top:8.7px">75917</span></div>
<div class="cell" style="left:632px;top:325px;width:123px"><span style="right:4px;top:8.7px">34506</span></div>
<div class="cell" style="left:758px;top:325px;width:357px"><span style="left:3.5px;top:8.7px">PARFUMERIE RENOIR</span></div>
<div class="cell" style="left:1118px;top:325px;width:231px"><span style="left:3px;top:8.7px">09152540150</span></div>
<div class="cell" style="left:1352px;top:325px;width:195px"><span style="left:0;right:0;text-align:center;top:8.7px">11/10/2021</span></div>
<div class="cell" style="left:1550px;top:325px;width:177px"><span style="left:0;right:0;text-align:center;top:8.7px">11/10/2021</span></div>
<div class="cell" style="left:1730px;top:325px;width:195px"><span style="left:0;right:0;text-align:center;top:8.7px">11/10/2021</span></div>
<div class="cell" style="left:1928px;top:325px;width:411px"><span style="left:3.3px;top:8.7px">IT21-68211I-15494</span></div>
<div class="cell" style="left:2342px;top:325px;width:213px"><span style="right:5px;top:8.7px">11,92</span></div>
<div class="cell" style="left:2558px;top:325px;width:141px"><span style="right:5px;top:8.7px">113</span></div>
<div class="cell" style="left:2702px;top:325px;width:69px"><span style="right:5px;top:8.7px">6</span></div>
<div class="cell" style="left:2774px;top:325px;width:195px"><span style="right:5px;top:8.7px"></span></div>
<svg class="a" style="left:3016px;top:336px" width="30" height="30"><path d="M6 6.3 L1.8 6.3 L1.8 26.6 L24.6 26.6 L24.6 24" fill="none" stroke="#484848" stroke-width="2.1"/><rect x="6" y="2" width="22.2" height="21.8" rx="0.8" fill="none" stroke="#484848" stroke-width="2.1"/></svg>
<div class="cell" style="left:3098px;top:325px;width:267px"><span style="left:4px;top:8.7px">AUTO INVIATA</span></div>
<div class="cell" style="left:3368px;top:325px;width:85px"><span style="left:3px;top:8.7px">AUTO INVIATA</span></div>
<div class="a" style="left:0;top:377px;width:3380px;height:54px;background:#f4f4f4"></div>
<svg class="a" style="left:70px;top:390px" width="30" height="30"><path d="M6 6.3 L1.8 6.3 L1.8 26.6 L24.6 26.6 L24.6 24" fill="none" stroke="#484848" stroke-width="2.1"/><rect x="6" y="2" width="22.2" height="21.8" rx="0.8" fill="none" stroke="#484848" stroke-width="2.1"/><path d="M10 13.5 L13.8 18.7 L24.5 5.8" fill="none" stroke="#484848" stroke-width="2.3"/></svg>
<svg class="a" style="left:144px;top:389px" width="32" height="32"><circle cx="16" cy="16" r="10" fill="#d4883c"/></svg>
<div class="cell" style="left:200px;top:379px;width:285px"><span style="left:4px;top:8.7px">Anagrafica differenza</span></div>
<div class="cell" style="left:488px;top:379px;width:141px"><span style="right:4px;top:8.7px">62888</span></div>
<div class="cell" style="left:632px;top:379px;width:123px"><span style="right:4px;top:8.7px">22177</span></div>
<div class="cell" style="left:758px;top:379px;width:357px"><span style="left:3.5px;top:8.7px">Giulio Tirelli</span></div>
<div class="cell" style="left:1118px;top:379px;width:231px"><span style="left:3px;top:8.7px">TRLGLI80M08</span></div>
<div class="cell" style="left:1352px;top:379px;width:195px"><span style="left:0;right:0;text-align:center;top:8.7px">11/10/2021</span></div>
<div class="cell" style="left:1550px;top:379px;width:177px"><span style="left:0;right:0;text-align:center;top:8.7px">11/10/2021</span></div>
<div class="cell" style="left:1730px;top:379px;width:195px"><span style="left:0;right:0;text-align:center;top:8.7px">11/10/2021</span></div>
<div class="cell" style="left:1928px;top:379px;width:411px"><span style="left:3.3px;top:8.7px">IT21-68211I-15495</span></div>
<div class="cell" style="left:2342px;top:379px;width:213px"><span style="right:5px;top:8.7px">23,85</span></div>
<div class="cell" style="left:2558px;top:379px;width:141px"><span style="right:5px;top:8.7px">113</span></div>
<div class="cell" style="left:2702px;top:379px;width:69px"><span style="right:5px;top:8.7px">6</span></div>
<div class="cell" style="left:2774px;top:379px;width:195px"><span style="right:5px;top:8.7px"></span></div>
<svg class="a" style="left:3016px;top:390px" width="30" height="30"><path d="M6 6.3 L1.8 6.3 L1.8 26.6 L24.6 26.6 L24.6 24" fill="none" stroke="#484848" stroke-width="2.1"/><rect x="6" y="2" width="22.2" height="21.8" rx="0.8" fill="none" stroke="#484848" stroke-width="2.1"/></svg>
<div class="cell" style="left:3098px;top:379px;width:267px"><span style="left:4px;top:8.7px">AUTO INVIATA</span></div>
<div class="cell" style="left:3368px;top:379px;width:85px"><span style="left:3px;top:8.7px">AUTO INVIATA</span></div>
<div class="a" style="left:0;top:431px;width:3380px;height:54px;background:#fff"></div>
<div class="a" style="left:53px;top:433px;width:3px;height:52px;background:#f8f8f8"></div>
<div class="a" style="left:125px;top:433px;width:3px;height:52px;background:#f8f8f8"></div>
<div class="a" style="left:197px;top:433px;width:3px;height:52px;background:#f8f8f8"></div>
<div class="a" style="left:485px;top:433px;width:3px;height:52px;background:#f8f8f8"></div>
<div class="a" style="left:629px;top:433px;width:3px;height:52px;background:#f8f8f8"></div>
<div class="a" style="left:755px;top:433px;width:3px;height:52px;background:#f8f8f8"></div>
<div class="a" style="left:1115px;top:433px;width:3px;height:52px;background:#f8f8f8"></div>
<div class="a" style="left:1349px;top:433px;width:3px;height:52px;background:#f8f8f8"></div>
<div class="a" style="left:1547px;top:433px;width:3px;height:52px;background:#f8f8f8"></div>
<div class="a" style="left:1727px;top:433px;width:3px;height:52px;background:#f8f8f8"></div>
<div class="a" style="left:1925px;top:433px;width:3px;height:52px;background:#f8f8f8"></div>
<div class="a" style="left:2339px;top:433px;width:3px;height:52px;background:#f8f8f8"></div>
<div class="a" style="left:2555px;top:433px;width:3px;height:52px;background:#f8f8f8"></div>
<div class="a" style="left:2699px;top:433px;width:3px;height:52px;background:#f8f8f8"></div>
<div class="a" style="left:2771px;top:433px;width:3px;height:52px;background:#f8f8f8"></div>
<div class="a" style="left:2969px;top:433px;width:3px;height:52px;background:#f8f8f8"></div>
<div class="a" style="left:3095px;top:433px;width:3px;height:52px;background:#f8f8f8"></div>
<div class="a" style="left:3365px;top:433px;width:3px;height:52px;background:#f8f8f8"></div>
<svg class="a" style="left:70px;top:444px" width="30" height="30"><path d="M6 6.3 L1.8 6.3 L1.8 26.6 L24.6 26.6 L24.6 24" fill="none" stroke="#484848" stroke-width="2.1"/><rect x="6" y="2" width="22.2" height="21.8" rx="0.8" fill="none" stroke="#484848" stroke-width="2.1"/><path d="M10 13.5 L13.8 18.7 L24.5 5.8" fill="none" stroke="#484848" stroke-width="2.3"/></svg>
<svg class="a" style="left:144px;top:443px" width="32" height="32"><circle cx="16" cy="16" r="10" fill="#b5203f"/></svg>
<div class="cell" style="left:200px;top:433px;width:285px"><span style="left:4px;top:8.7px">Fattura incompleta</span></div>
<div class="cell" style="left:488px;top:433px;width:141px"><span style="right:4px;top:8.7px">75916</span></div>
<div class="cell" style="left:632px;top:433px;width:123px"><span style="right:4px;top:8.7px">34505</span></div>
<div class="cell" style="left:758px;top:433px;width:357px"><span style="left:3.5px;top:8.7px">Alberto Negrini</span></div>
<div class="cell" style="left:1118px;top:433px;width:231px"><span style="left:3px;top:8.7px">01993560182</span></div>
<div class="cell" style="left:1352px;top:433px;width:195px"><span style="left:0;right:0;text-align:center;top:8.7px">11/10/2021</span></div>
<div class="cell" style="left:1550px;top:433px;width:177px"><span style="left:0;right:0;text-align:center;top:8.7px">11/10/2021</span></div>
<div class="cell" style="left:1730px;top:433px;width:195px"><span style="left:0;right:0;text-align:center;top:8.7px">11/10/2021</span></div>
<div class="cell" style="left:1928px;top:433px;width:411px"><span style="left:3.3px;top:8.7px">IT21-68211I-15496</span></div>
<div class="cell" style="left:2342px;top:433px;width:213px"><span style="right:5px;top:8.7px">5,71</span></div>
<div class="cell" style="left:2558px;top:433px;width:141px"><span style="right:5px;top:8.7px">113</span></div>
<div class="cell" style="left:2702px;top:433px;width:69px"><span style="right:5px;top:8.7px">6</span></div>
<div class="cell" style="left:2774px;top:433px;width:195px"><span style="right:5px;top:8.7px"></span></div>
<svg class="a" style="left:3016px;top:444px" width="30" height="30"><path d="M6 6.3 L1.8 6.3 L1.8 26.6 L24.6 26.6 L24.6 24" fill="none" stroke="#484848" stroke-width="2.1"/><rect x="6" y="2" width="22.2" height="21.8" rx="0.8" fill="none" stroke="#484848" stroke-width="2.1"/></svg>
<div class="cell" style="left:3098px;top:433px;width:267px"><span style="left:4px;top:8.7px">AUTO INVIATA</span></div>
<div class="cell" style="left:3368px;top:433px;width:85px"><span style="left:3px;top:8.7px">AUTO INVIATA</span></div>
<div class="a" style="left:0;top:485px;width:3380px;height:54px;background:#f4f4f4"></div>
<svg class="a" style="left:70px;top:498px" width="30" height="30"><path d="M6 6.3 L1.8 6.3 L1.8 26.6 L24.6 26.6 L24.6 24" fill="none" stroke="#484848" stroke-width="2.1"/><rect x="6" y="2" width="22.2" height="21.8" rx="0.8" fill="none" stroke="#484848" stroke-width="2.1"/><path d="M10 13.5 L13.8 18.7 L24.5 5.8" fill="none" stroke="#484848" stroke-width="2.3"/></svg>
<svg class="a" style="left:144px;top:497px" width="32" height="32"><circle cx="16" cy="16" r="10" fill="#b5203f"/></svg>
<div class="cell" style="left:200px;top:487px;width:285px"><span style="left:4px;top:8.7px">Fattura incompleta</span></div>
<div class="cell" style="left:488px;top:487px;width:141px"><span style="right:4px;top:8.7px">75915</span></div>
<div class="cell" style="left:632px;top:487px;width:123px"><span style="right:4px;top:8.7px">34504</span></div>
<div class="cell" style="left:758px;top:487px;width:357px"><span style="left:3.5px;top:8.7px">Epicura Srl</span></div>
<div class="cell" style="left:1118px;top:487px;width:231px"><span style="left:3px;top:8.7px">11744440014</span></div>
<div class="cell" style="left:1352px;top:487px;width:195px"><span style="left:0;right:0;text-align:center;top:8.7px">11/10/2021</span></div>
<div class="cell" style="left:1550px;top:487px;width:177px"><span style="left:0;right:0;text-align:center;top:8.7px">11/10/2021</span></div>
<div class="cell" style="left:1730px;top:487px;width:195px"><span style="left:0;right:0;text-align:center;top:8.7px">11/10/2021</span></div>
<div class="cell" style="left:1928px;top:487px;width:411px"><span style="left:3.3px;top:8.7px">IT21-68211I-15497</span></div>
<div class="cell" style="left:2342px;top:487px;width:213px"><span style="right:5px;top:8.7px">7,49</span></div>
<div class="cell" style="left:2558px;top:487px;width:141px"><span style="right:5px;top:8.7px">113</span></div>
<div class="cell" style="left:2702px;top:487px;width:69px"><span style="right:5px;top:8.7px">6</span></div>
<div class="cell" style="left:2774px;top:487px;width:195px"><span style="right:5px;top:8.7px"></span></div>
<svg class="a" style="left:3016px;top:498px" width="30" height="30"><path d="M6 6.3 L1.8 6.3 L1.8 26.6 L24.6 26.6 L24.6 24" fill="none" stroke="#484848" stroke-width="2.1"/><rect x="6" y="2" width="22.2" height="21.8" rx="0.8" fill="none" stroke="#484848" stroke-width="2.1"/></svg>
<div class="cell" style="left:3098px;top:487px;width:267px"><span style="left:4px;top:8.7px">AUTO INVIATA</span></div>
<div class="cell" style="left:3368px;top:487px;width:85px"><span style="left:3px;top:8.7px">AUTO INVIATA</span></div>
<div class="a" style="left:0;top:539px;width:3380px;height:54px;background:#fff"></div>
<div class="a" style="left:53px;top:541px;width:3px;height:52px;background:#f8f8f8"></div>
<div class="a" style="left:125px;top:541px;width:3px;height:52px;background:#f8f8f8"></div>
<div class="a" style="left:197px;top:541px;width:3px;height:52px;background:#f8f8f8"></div>
<div class="a" style="left:485px;top:541px;width:3px;height:52px;background:#f8f8f8"></div>
<div class="a" style="left:629px;top:541px;width:3px;height:52px;background:#f8f8f8"></div>
<div class="a" style="left:755px;top:541px;width:3px;height:52px;background:#f8f8f8"></div>
<div class="a" style="left:1115px;top:541px;width:3px;height:52px;background:#f8f8f8"></div>
<div class="a" style="left:1349px;top:541px;width:3px;height:52px;background:#f8f8f8"></div>
<div class="a" style="left:1547px;top:541px;width:3px;height:52px;background:#f8f8f8"></div>
<div class="a" style="left:1727px;top:541px;width:3px;height:52px;background:#f8f8f8"></div>
<div class="a" style="left:1925px;top:541px;width:3px;height:52px;background:#f8f8f8"></div>
<div class="a" style="left:2339px;top:541px;width:3px;height:52px;background:#f8f8f8"></div>
<div class="a" style="left:2555px;top:541px;width:3px;height:52px;background:#f8f8f8"></div>
<div class="a" style="left:2699px;top:541px;width:3px;height:52px;background:#f8f8f8"></div>
<div class="a" style="left:2771px;top:541px;width:3px;height:52px;background:#f8f8f8"></div>
<div class="a" style="left:2969px;top:541px;width:3px;height:52px;background:#f8f8f8"></div>
<div class="a" style="left:3095px;top:541px;width:3px;height:52px;background:#f8f8f8"></div>
<div class="a" style="left:3365px;top:541px;width:3px;height:52px;background:#f8f8f8"></div>
<svg class="a" style="left:70px;top:552px" width="30" height="30"><path d="M6 6.3 L1.8 6.3 L1.8 26.6 L24.6 26.6 L24.6 24" fill="none" stroke="#484848" stroke-width="2.1"/><rect x="6" y="2" width="22.2" height="21.8" rx="0.8" fill="none" stroke="#484848" stroke-width="2.1"/><path d="M10 13.5 L13.8 18.7 L24.5 5.8" fill="none" stroke="#484848" stroke-width="2.3"/></svg>
<svg class="a" style="left:144px;top:551px" width="32" height="32"><circle cx="16" cy="16" r="10" fill="#b5203f"/></svg>
<div class="cell" style="left:200px;top:541px;width:285px"><span style="left:4px;top:8.7px">Fattura incompleta</span></div>
<div class="cell" style="left:488px;top:541px;width:141px"><span style="right:4px;top:8.7px">75914</span></div>
<div class="cell" style="left:632px;top:541px;width:123px"><span style="right:4px;top:8.7px">34503</span></div>
<div class="cell" style="left:758px;top:541px;width:357px"><span style="left:3.5px;top:8.7px">CAVERNI RICCARDO</span></div>
<div class="cell" style="left:1118px;top:541px;width:231px"><span style="left:3px;top:8.7px">03582370486</span></div>
<div class="cell" style="left:1352px;top:541px;width:195px"><span style="left:0;right:0;text-align:center;top:8.7px">11/10/2021</span></div>
<div class="cell" style="left:1550px;top:541px;width:177px"><span style="left:0;right:0;text-align:center;top:8.7px">11/10/2021</span></div>
<div class="cell" style="left:1730px;top:541px;width:195px"><span style="left:0;right:0;text-align:center;top:8.7px">11/10/2021</span></div>
<div class="cell" style="left:1928px;top:541px;width:411px"><span style="left:3.3px;top:8.7px">IT21-68211I-15498</span></div>
<div class="cell" style="left:2342px;top:541px;width:213px"><span style="right:5px;top:8.7px">5,88</span></div>
<div class="cell" style="left:2558px;top:541px;width:141px"><span style="right:5px;top:8.7px">113</span></div>
<div class="cell" style="left:2702px;top:541px;width:69px"><span style="right:5px;top:8.7px">6</span></div>
<div class="cell" style="left:2774px;top:541px;width:195px"><span style="right:5px;top:8.7px"></span></div>
<svg class="a" style="left:3016px;top:552px" width="30" height="30"><path d="M6 6.3 L1.8 6.3 L1.8 26.6 L24.6 26.6 L24.6 24" fill="none" stroke="#484848" stroke-width="2.1"/><rect x="6" y="2" width="22.2" height="21.8" rx="0.8" fill="none" stroke="#484848" stroke-width="2.1"/></svg>
<div class="cell" style="left:3098px;top:541px;width:267px"><span style="left:4px;top:8.7px">AUTO INVIATA</span></div>
<div class="cell" style="left:3368px;top:541px;width:85px"><span style="left:3px;top:8.7px">AUTO INVIATA</span></div>
<div class="a" style="left:0;top:593px;width:3380px;height:54px;background:#f4f4f4"></div>
<svg class="a" style="left:70px;top:606px" width="30" height="30"><path d="M6 6.3 L1.8 6.3 L1.8 26.6 L24.6 26.6 L24.6 24" fill="none" stroke="#484848" stroke-width="2.1"/><rect x="6" y="2" width="22.2" height="21.8" rx="0.8" fill="none" stroke="#484848" stroke-width="2.1"/><path d="M10 13.5 L13.8 18.7 L24.5 5.8" fill="none" stroke="#484848" stroke-width="2.3"/></svg>
<svg class="a" style="left:144px;top:605px" width="32" height="32"><circle cx="16" cy="16" r="10" fill="#b5203f"/></svg>
<div class="cell" style="left:200px;top:595px;width:285px"><span style="left:4px;top:8.7px">Fattura incompleta</span></div>
<div class="cell" style="left:488px;top:595px;width:141px"><span style="right:4px;top:8.7px">75913</span></div>
<div class="cell" style="left:632px;top:595px;width:123px"><span style="right:4px;top:8.7px">34502</span></div>
<div class="cell" style="left:758px;top:595px;width:357px"><span style="left:3.5px;top:8.7px">Aquagon srl</span></div>
<div class="cell" style="left:1118px;top:595px;width:231px"><span style="left:3px;top:8.7px">15145131007</span></div>
<div class="cell" style="left:1352px;top:595px;width:195px"><span style="left:0;right:0;text-align:center;top:8.7px">11/10/2021</span></div>
<div class="cell" style="left:1550px;top:595px;width:177px"><span style="left:0;right:0;text-align:center;top:8.7px">11/10/2021</span></div>
<div class="cell" style="left:1730px;top:595px;width:195px"><span style="left:0;right:0;text-align:center;top:8.7px">11/10/2021</span></div>
<div class="cell" style="left:1928px;top:595px;width:411px"><span style="left:3.3px;top:8.7px">IT21-68211I-15499</span></div>
<div class="cell" style="left:2342px;top:595px;width:213px"><span style="right:5px;top:8.7px">19,96</span></div>
<div class="cell" style="left:2558px;top:595px;width:141px"><span style="right:5px;top:8.7px">113</span></div>
<div class="cell" style="left:2702px;top:595px;width:69px"><span style="right:5px;top:8.7px">6</span></div>
<div class="cell" style="left:2774px;top:595px;width:195px"><span style="right:5px;top:8.7px"></span></div>
<svg class="a" style="left:3016px;top:606px" width="30" height="30"><path d="M6 6.3 L1.8 6.3 L1.8 26.6 L24.6 26.6 L24.6 24" fill="none" stroke="#484848" stroke-width="2.1"/><rect x="6" y="2" width="22.2" height="21.8" rx="0.8" fill="none" stroke="#484848" stroke-width="2.1"/></svg>
<div class="cell" style="left:3098px;top:595px;width:267px"><span style="left:4px;top:8.7px">AUTO INVIATA</span></div>
<div class="cell" style="left:3368px;top:595px;width:85px"><span style="left:3px;top:8.7px">AUTO INVIATA</span></div>
<div class="a" style="left:0;top:647px;width:3380px;height:54px;background:#fff"></div>
<div class="a" style="left:53px;top:649px;width:3px;height:52px;background:#f8f8f8"></div>
<div class="a" style="left:125px;top:649px;width:3px;height:52px;background:#f8f8f8"></div>
<div class="a" style="left:197px;top:649px;width:3px;height:52px;background:#f8f8f8"></div>
<div class="a" style="left:485px;top:649px;width:3px;height:52px;background:#f8f8f8"></div>
<div class="a" style="left:629px;top:649px;width:3px;height:52px;background:#f8f8f8"></div>
<div class="a" style="left:755px;top:649px;width:3px;height:52px;background:#f8f8f8"></div>
<div class="a" style="left:1115px;top:649px;width:3px;height:52px;background:#f8f8f8"></div>
<div class="a" style="left:1349px;top:649px;width:3px;height:52px;background:#f8f8f8"></div>
<div class="a" style="left:1547px;top:649px;width:3px;height:52px;background:#f8f8f8"></div>
<div class="a" style="left:1727px;top:649px;width:3px;height:52px;background:#f8f8f8"></div>
<div class="a" style="left:1925px;top:649px;width:3px;height:52px;background:#f8f8f8"></div>
<div class="a" style="left:2339px;top:649px;width:3px;height:52px;background:#f8f8f8"></div>
<div class="a" style="left:2555px;top:649px;width:3px;height:52px;background:#f8f8f8"></div>
<div class="a" style="left:2699px;top:649px;width:3px;height:52px;background:#f8f8f8"></div>
<div class="a" style="left:2771px;top:649px;width:3px;height:52px;background:#f8f8f8"></div>
<div class="a" style="left:2969px;top:649px;width:3px;height:52px;background:#f8f8f8"></div>
<div class="a" style="left:3095px;top:649px;width:3px;height:52px;background:#f8f8f8"></div>
<div class="a" style="left:3365px;top:649px;width:3px;height:52px;background:#f8f8f8"></div>
<svg class="a" style="left:70px;top:660px" width="30" height="30"><path d="M6 6.3 L1.8 6.3 L1.8 26.6 L24.6 26.6 L24.6 24" fill="none" stroke="#484848" stroke-width="2.1"/><rect x="6" y="2" width="22.2" height="21.8" rx="0.8" fill="none" stroke="#484848" stroke-width="2.1"/><path d="M10 13.5 L13.8 18.7 L24.5 5.8" fill="none" stroke="#484848" stroke-width="2.3"/></svg>
<svg class="a" style="left:144px;top:659px" width="32" height="32"><circle cx="16" cy="16" r="10" fill="#b5203f"/></svg>
<div class="cell" style="left:200px;top:649px;width:285px"><span style="left:4px;top:8.7px">Fattura incompleta</span></div>
<div class="cell" style="left:488px;top:649px;width:141px"><span style="right:4px;top:8.7px">75911</span></div>
<div class="cell" style="left:632px;top:649px;width:123px"><span style="right:4px;top:8.7px">34500</span></div>
<div class="cell" style="left:758px;top:649px;width:357px"><span style="left:3.5px;top:8.7px">Dr. Vittorio Bisogni</span></div>
<div class="cell" style="left:1118px;top:649px;width:231px"><span style="left:3px;top:8.7px">02455990792</span></div>
<div class="cell" style="left:1352px;top:649px;width:195px"><span style="left:0;right:0;text-align:center;top:8.7px">11/10/2021</span></div>
<div class="cell" style="left:1550px;top:649px;width:177px"><span style="left:0;right:0;text-align:center;top:8.7px">11/10/2021</span></div>
<div class="cell" style="left:1730px;top:649px;width:195px"><span style="left:0;right:0;text-align:center;top:8.7px">11/10/2021</span></div>
<div class="cell" style="left:1928px;top:649px;width:411px"><span style="left:3.3px;top:8.7px">IT21-68211I-15500</span></div>
<div class="cell" style="left:2342px;top:649px;width:213px"><span style="right:5px;top:8.7px">4,88</span></div>
<div class="cell" style="left:2558px;top:649px;width:141px"><span style="right:5px;top:8.7px">113</span></div>
<div class="cell" style="left:2702px;top:649px;width:69px"><span style="right:5px;top:8.7px">6</span></div>
<div class="cell" style="left:2774px;top:649px;width:195px"><span style="right:5px;top:8.7px"></span></div>
<svg class="a" style="left:3016px;top:660px" width="30" height="30"><path d="M6 6.3 L1.8 6.3 L1.8 26.6 L24.6 26.6 L24.6 24" fill="none" stroke="#484848" stroke-width="2.1"/><rect x="6" y="2" width="22.2" height="21.8" rx="0.8" fill="none" stroke="#484848" stroke-width="2.1"/></svg>
<div class="cell" style="left:3098px;top:649px;width:267px"><span style="left:4px;top:8.7px">AUTO INVIATA</span></div>
<div class="cell" style="left:3368px;top:649px;width:85px"><span style="left:3px;top:8.7px">AUTO INVIATA</span></div>
<div class="a" style="left:0;top:701px;width:3380px;height:54px;background:#f4f4f4"></div>
<svg class="a" style="left:70px;top:714px" width="30" height="30"><path d="M6 6.3 L1.8 6.3 L1.8 26.6 L24.6 26.6 L24.6 24" fill="none" stroke="#484848" stroke-width="2.1"/><rect x="6" y="2" width="22.2" height="21.8" rx="0.8" fill="none" stroke="#484848" stroke-width="2.1"/><path d="M10 13.5 L13.8 18.7 L24.5 5.8" fill="none" stroke="#484848" stroke-width="2.3"/></svg>
<svg class="a" style="left:144px;top:713px" width="32" height="32"><circle cx="16" cy="16" r="10" fill="#b5203f"/></svg>
<div class="cell" style="left:200px;top:703px;width:285px"><span style="left:4px;top:8.7px">Fattura incompleta</span></div>
<div class="cell" style="left:488px;top:703px;width:141px"><span style="right:4px;top:8.7px">75910</span></div>
<div class="cell" style="left:632px;top:703px;width:123px"><span style="right:4px;top:8.7px">34499</span></div>
<div class="cell" style="left:758px;top:703px;width:357px"><span style="left:3.5px;top:8.7px">STUDIO SAVIC DI SAVIC</span></div>
<div class="cell" style="left:1118px;top:703px;width:231px"><span style="left:3px;top:8.7px">04222050249</span></div>
<div class="cell" style="left:1352px;top:703px;width:195px"><span style="left:0;right:0;text-align:center;top:8.7px">11/10/2021</span></div>
<div class="cell" style="left:1550px;top:703px;width:177px"><span style="left:0;right:0;text-align:center;top:8.7px">11/10/2021</span></div>
<div class="cell" style="left:1730px;top:703px;width:195px"><span style="left:0;right:0;text-align:center;top:8.7px">11/10/2021</span></div>
<div class="cell" style="left:1928px;top:703px;width:411px"><span style="left:3.3px;top:8.7px">IT21-68211I-15501</span></div>
<div class="cell" style="left:2342px;top:703px;width:213px"><span style="right:5px;top:8.7px">7,87</span></div>
<div class="cell" style="left:2558px;top:703px;width:141px"><span style="right:5px;top:8.7px">113</span></div>
<div class="cell" style="left:2702px;top:703px;width:69px"><span style="right:5px;top:8.7px">6</span></div>
<div class="cell" style="left:2774px;top:703px;width:195px"><span style="right:5px;top:8.7px"></span></div>
<svg class="a" style="left:3016px;top:714px" width="30" height="30"><path d="M6 6.3 L1.8 6.3 L1.8 26.6 L24.6 26.6 L24.6 24" fill="none" stroke="#484848" stroke-width="2.1"/><rect x="6" y="2" width="22.2" height="21.8" rx="0.8" fill="none" stroke="#484848" stroke-width="2.1"/></svg>
<div class="cell" style="left:3098px;top:703px;width:267px"><span style="left:4px;top:8.7px">AUTO INVIATA</span></div>
<div class="cell" style="left:3368px;top:703px;width:85px"><span style="left:3px;top:8.7px">AUTO INVIATA</span></div>
<div class="a" style="left:0;top:755px;width:3380px;height:54px;background:#fff"></div>
<div class="a" style="left:53px;top:757px;width:3px;height:52px;background:#f8f8f8"></div>
<div class="a" style="left:125px;top:757px;width:3px;height:52px;background:#f8f8f8"></div>
<div class="a" style="left:197px;top:757px;width:3px;height:52px;background:#f8f8f8"></div>
<div class="a" style="left:485px;top:757px;width:3px;height:52px;background:#f8f8f8"></div>
<div class="a" style="left:629px;top:757px;width:3px;height:52px;background:#f8f8f8"></div>
<div class="a" style="left:755px;top:757px;width:3px;height:52px;background:#f8f8f8"></div>
<div class="a" style="left:1115px;top:757px;width:3px;height:52px;background:#f8f8f8"></div>
<div class="a" style="left:1349px;top:757px;width:3px;height:52px;background:#f8f8f8"></div>
<div class="a" style="left:1547px;top:757px;width:3px;height:52px;background:#f8f8f8"></div>
<div class="a" style="left:1727px;top:757px;width:3px;height:52px;background:#f8f8f8"></div>
<div class="a" style="left:1925px;top:757px;width:3px;height:52px;background:#f8f8f8"></div>
<div class="a" style="left:2339px;top:757px;width:3px;height:52px;background:#f8f8f8"></div>
<div class="a" style="left:2555px;top:757px;width:3px;height:52px;background:#f8f8f8"></div>
<div class="a" style="left:2699px;top:757px;width:3px;height:52px;background:#f8f8f8"></div>
<div class="a" style="left:2771px;top:757px;width:3px;height:52px;background:#f8f8f8"></div>
<div class="a" style="left:2969px;top:757px;width:3px;height:52px;background:#f8f8f8"></div>
<div class="a" style="left:3095px;top:757px;width:3px;height:52px;background:#f8f8f8"></div>
<div class="a" style="left:3365px;top:757px;width:3px;height:52px;background:#f8f8f8"></div>
<svg class="a" style="left:70px;top:768px" width="30" height="30"><path d="M6 6.3 L1.8 6.3 L1.8 26.6 L24.6 26.6 L24.6 24" fill="none" stroke="#484848" stroke-width="2.1"/><rect x="6" y="2" width="22.2" height="21.8" rx="0.8" fill="none" stroke="#484848" stroke-width="2.1"/><path d="M10 13.5 L13.8 18.7 L24.5 5.8" fill="none" stroke="#484848" stroke-width="2.3"/></svg>
<svg class="a" style="left:144px;top:767px" width="32" height="32"><circle cx="16" cy="16" r="10" fill="#b5203f"/></svg>
<div class="cell" style="left:200px;top:757px;width:285px"><span style="left:4px;top:8.7px">Fattura incompleta</span></div>
<div class="cell" style="left:488px;top:757px;width:141px"><span style="right:4px;top:8.7px">75907</span></div>
<div class="cell" style="left:632px;top:757px;width:123px"><span style="right:4px;top:8.7px">34496</span></div>
<div class="cell" style="left:758px;top:757px;width:357px"><span style="left:3.5px;top:8.7px">Officina Balletti di Balletti</span></div>
<div class="cell" style="left:1118px;top:757px;width:231px"><span style="left:3px;top:8.7px">00851780429</span></div>
<div class="cell" style="left:1352px;top:757px;width:195px"><span style="left:0;right:0;text-align:center;top:8.7px">11/10/2021</span></div>
<div class="cell" style="left:1550px;top:757px;width:177px"><span style="left:0;right:0;text-align:center;top:8.7px">11/10/2021</span></div>
<div class="cell" style="left:1730px;top:757px;width:195px"><span style="left:0;right:0;text-align:center;top:8.7px">11/10/2021</span></div>
<div class="cell" style="left:1928px;top:757px;width:411px"><span style="left:3.3px;top:8.7px">IT21-68211I-15502</span></div>
<div class="cell" style="left:2342px;top:757px;width:213px"><span style="right:5px;top:8.7px">11,92</span></div>
<div class="cell" style="left:2558px;top:757px;width:141px"><span style="right:5px;top:8.7px">113</span></div>
<div class="cell" style="left:2702px;top:757px;width:69px"><span style="right:5px;top:8.7px">6</span></div>
<div class="cell" style="left:2774px;top:757px;width:195px"><span style="right:5px;top:8.7px"></span></div>
<svg class="a" style="left:3016px;top:768px" width="30" height="30"><path d="M6 6.3 L1.8 6.3 L1.8 26.6 L24.6 26.6 L24.6 24" fill="none" stroke="#484848" stroke-width="2.1"/><rect x="6" y="2" width="22.2" height="21.8" rx="0.8" fill="none" stroke="#484848" stroke-width="2.1"/></svg>
<div class="cell" style="left:3098px;top:757px;width:267px"><span style="left:4px;top:8.7px">AUTO INVIATA</span></div>
<div class="cell" style="left:3368px;top:757px;width:85px"><span style="left:3px;top:8.7px">AUTO INVIATA</span></div>
<div class="a" style="left:0;top:870px;width:3380px;height:28px;background:#efefef"></div>
<div class="a" style="left:30px;top:874px;width:663px;height:20px;background:#cdcdcd;border:1px solid #b8b8b8"></div>
<div class="a" style="left:11px;top:877px;width:0;height:0;border-top:7px solid transparent;border-bottom:7px solid transparent;border-right:8px solid #888"></div>
<div class="a" style="left:3357px;top:877px;width:0;height:0;border-top:7px solid transparent;border-bottom:7px solid transparent;border-left:8px solid #888"></div>
<div class="a" style="left:3380px;top:0;width:32px;height:898px;background:#fff">
<div class="seg" style="top:0px;height:223px"></div>
<svg class="a" style="left:5px;top:103px" width="22" height="19"><path d="M5 13.5 L11 6 L17 13.5 Z" fill="#8c8c8c" stroke="#8c8c8c" stroke-width="1.6" stroke-linejoin="round"/></svg>
<div class="seg" style="top:224px;height:223px"></div>
<svg class="a" style="left:5px;top:327px" width="22" height="19"><path d="M5.5 9.5 L11 3 L16.5 9.5 Z M5.5 16.5 L11 10.5 L16.5 16.5 Z" fill="#8c8c8c" stroke="#8c8c8c" stroke-width="1.6" stroke-linejoin="round"/></svg>
<div class="seg" style="top:448px;height:223px"></div>
<svg class="a" style="left:5px;top:551px" width="22" height="19"><path d="M5.5 2.5 L11 9 L16.5 2.5 Z M5.5 9.5 L11 15.5 L16.5 9.5 Z" fill="#8c8c8c" stroke="#8c8c8c" stroke-width="1.6" stroke-linejoin="round"/></svg>
<div class="seg" style="top:672px;height:225px"></div>
<svg class="a" style="left:5px;top:776px" width="22" height="19"><path d="M5 5.5 L11 13 L17 5.5 Z" fill="#8c8c8c" stroke="#8c8c8c" stroke-width="1.6" stroke-linejoin="round"/></svg>
</div>
</div>
<div class="btn" style="left:3484px;top:657px;width:262px;height:107px">Deseleziona<br>tutto</div>
<div class="btn" style="left:3484px;top:767px;width:262px;height:107px">Dettaglio<br>fattura</div>
<div class="btn" style="left:3484px;top:877px;width:262px;height:107px">Stati della<br>fattura</div>
<div class="btn" style="left:3484px;top:987px;width:262px;height:107px">Variazione<br>prima nota</div>
<div class="btn" style="left:3484px;top:1097px;width:262px;height:107px">Inizio<br>Anteprima</div>
<div class="btn" style="left:3484px;top:1207px;width:262px;height:107px">Contabilizza<br>dati</div>
<div class="btn" style="left:3484px;top:1317px;width:262px;height:107px">Prelievo</div>
<div class="btn" style="left:3484px;top:1427px;width:262px;height:107px">Inserimento<br>prima nota</div>
<div class="btn" style="left:3484px;top:1537px;width:262px;height:107px">Assegna<br>quater/sez.</div>
<div class="a" style="left:2px;top:1692px;width:3752px;height:1px;background:#555"></div><div class="a" style="left:2px;top:1693px;width:3752px;height:1px;background:#c4c4c4"></div>
<div class="btn" style="left:15px;top:1707px;width:260px;height:107px">Gestione viste</div>
<div class="btn" style="left:279px;top:1707px;width:260px;height:107px">Stampa griglia</div>
<div class="btn" style="left:543px;top:1707px;width:260px;height:107px">Export griglia</div>
<div class="btn dis" style="left:807px;top:1707px;width:260px;height:107px">Variazione<br>documento</div>
<div class="btn dis" style="left:1071px;top:1707px;width:260px;height:107px">Stampa<br>documento</div>
<div class="btn" style="left:1335px;top:1707px;width:260px;height:107px">Altre funzioni</div>
<div class="btn" style="left:3223px;top:1707px;width:260px;height:107px"><u>F</u>iltri</div>
<div class="btn" style="left:3487px;top:1707px;width:260px;height:107px"><u>U</u>scita</div>
<svg class="a" style="left:0;top:0" width="3754" height="1823"><path d="M3130.34 1231.64 L3488.15 1563.66 L3490.9 1560.7 L3498 1577 L3481.3 1571 L3484.05 1568.04 L3129.66 1232.36 Z" fill="#f53a3a"/></svg></body></html>
